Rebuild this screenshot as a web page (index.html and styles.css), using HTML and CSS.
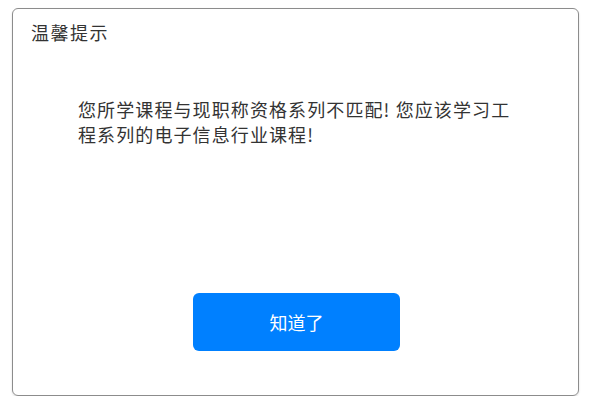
FILE: index.html
```html
<!DOCTYPE html>
<html lang="zh-CN">
<head>
  <meta charset="UTF-8" />
  <link rel="stylesheet" href="styles.css">
</head>
<body>
  <div class="dialog">
    <div class="dialog-title">温馨提示</div>
    <p class="dialog-message">您所学课程与现职称资格系列不匹配! 您应该学习工程系列的电子信息行业课程!</p>
    <div class="dialog-footer">
      <button class="btn-ok">知道了</button>
    </div>
  </div>
</body>
</html>
```

FILE: styles.css
```css
body {
  margin: 0;
  background: #fff;
  font-family: "Noto Sans CJK SC", "Noto Sans", sans-serif;
  color: #333;
}

.dialog {
  box-sizing: border-box;
  width: 567px;
  height: 388px;
  margin: 8px 0 0 12px;
  border: 1px solid #8c8c8c;
  border-radius: 6px;
  box-shadow: 0 1px 2px rgba(0, 0, 0, 0.15);
  display: flex;
  flex-direction: column;
}

.dialog-title {
  padding: 10px 18px 0;
  font-size: 18px;
  line-height: 26px;
  letter-spacing: 1.5px;
}

.dialog-message {
  width: 442px;
  margin: 52px 0 0 65px;
  font-size: 18px;
  line-height: 25px;
  letter-spacing: 1.1px;
}

.dialog-footer {
  margin-top: auto;
  padding-bottom: 44px;
  display: flex;
  justify-content: center;
}

.btn-ok {
  width: 207px;
  height: 58px;
  margin-left: 2px;
  border: none;
  border-radius: 6px;
  background-color: #0080ff;
  color: #fff;
  font-family: inherit;
  font-size: 18px;
  cursor: pointer;
}
```
